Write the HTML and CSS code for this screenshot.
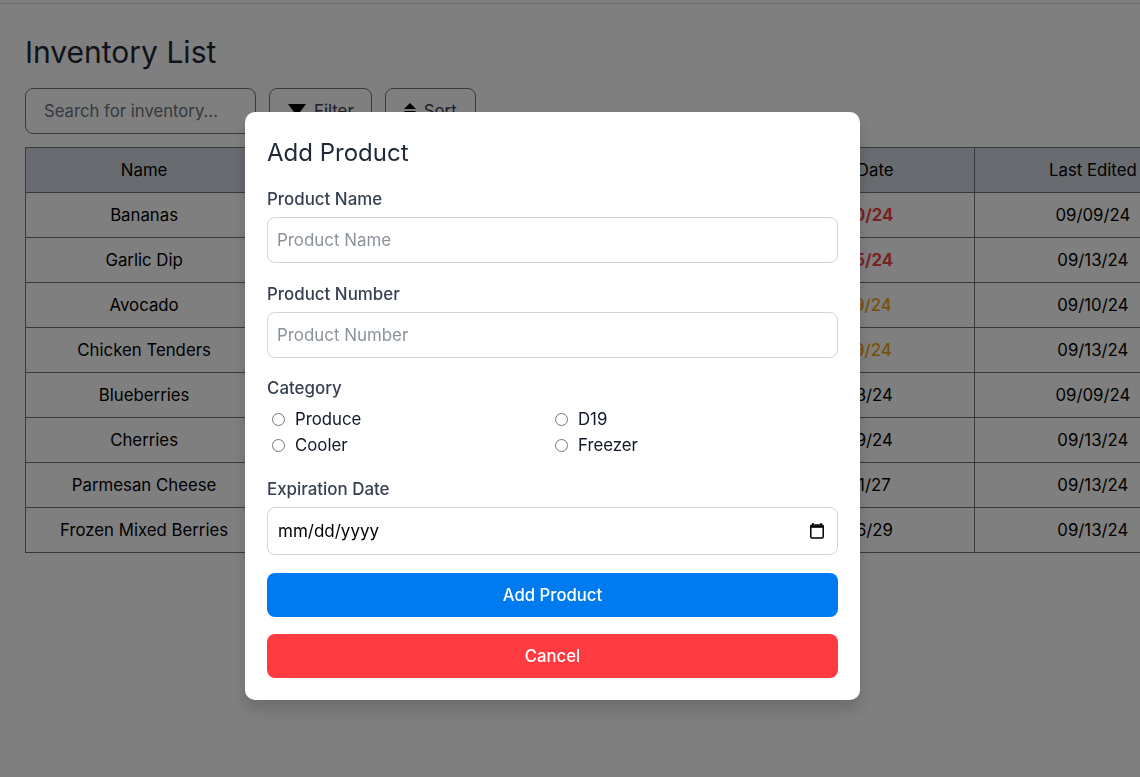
FILE: index.html
```html
<!DOCTYPE html>
<html lang="en">
<head>
  <meta charset="UTF-8">
  <title>Inventory List</title>
  <link rel="stylesheet" href="styles.css">
</head>
<body>

  <div class="topbar"></div>

  <main class="page">
    <h1>Inventory List</h1>

    <div class="toolbar">
      <input class="search" type="text" placeholder="Search for inventory...">
      <button class="tool-btn">
        <svg class="tool-icon" width="18" height="12" viewBox="0 0 18 12"><path d="M0 0h18l-9 12z" fill="#000"/></svg>
        Filter
      </button>
      <button class="tool-btn sort-btn">
        <svg class="tool-icon" width="12" height="14" viewBox="0 0 12 14"><path d="M6 0l6 6H0z" fill="#000"/><path d="M6 14l6-6H0z" fill="#000"/></svg>
        Sort
      </button>
    </div>

    <table class="inventory">
      <thead>
        <tr><th>Name</th><th>Number</th><th>Category</th><th>Exp. Date</th><th>Last Edited</th></tr>
      </thead>
      <tbody>
        <tr><td>Bananas</td><td></td><td></td><td class="expired">09/10/24</td><td>09/09/24</td></tr>
        <tr><td>Garlic Dip</td><td></td><td></td><td class="expired">09/15/24</td><td>09/13/24</td></tr>
        <tr><td>Avocado</td><td></td><td></td><td class="soon">09/19/24</td><td>09/10/24</td></tr>
        <tr><td>Chicken Tenders</td><td></td><td></td><td class="soon">09/19/24</td><td>09/13/24</td></tr>
        <tr><td>Blueberries</td><td></td><td></td><td>09/28/24</td><td>09/09/24</td></tr>
        <tr><td>Cherries</td><td></td><td></td><td>09/29/24</td><td>09/13/24</td></tr>
        <tr><td>Parmesan Cheese</td><td></td><td></td><td>02/01/27</td><td>09/13/24</td></tr>
        <tr><td>Frozen Mixed Berries</td><td></td><td></td><td>06/06/29</td><td>09/13/24</td></tr>
      </tbody>
    </table>
  </main>

  <div class="overlay">
    <form class="modal">
      <h2>Add Product</h2>

      <label class="field-label" for="productName">Product Name</label>
      <input class="text-input" id="productName" type="text" placeholder="Product Name">

      <label class="field-label second" for="productNumber">Product Number</label>
      <input class="text-input" id="productNumber" type="text" placeholder="Product Number">

      <div class="field-label third">Category</div>
      <div class="radios">
        <label class="radio"><input type="radio" name="category"> Produce</label>
        <label class="radio"><input type="radio" name="category"> D19</label>
        <label class="radio"><input type="radio" name="category"> Cooler</label>
        <label class="radio"><input type="radio" name="category"> Freezer</label>
      </div>

      <label class="field-label fourth" for="expDate">Expiration Date</label>
      <div class="date-input" id="expDate">
        <span>mm/dd/yyyy</span>
        <svg width="16" height="16" viewBox="0 0 16 16"><path d="M4 0v2M12 0v2" stroke="#000" stroke-width="1.6"/><rect x="1.8" y="2" width="12.4" height="13" rx="1.2" fill="none" stroke="#000" stroke-width="1.5"/><path d="M2 2.5h12v2.3H2z" fill="#000"/></svg>
      </div>

      <button class="action add" type="button">Add Product</button>
      <button class="action cancel" type="button">Cancel</button>
    </form>
  </div>

</body>
</html>
```

FILE: styles.css
```css
html, body {
  height: 100%;
}
body {
  margin: 0;
  font-family: 'Inter', sans-serif;
  background-color: #fff;
  color: #000;
  overflow: hidden;
}
.topbar {
  height: 3px;
  border-bottom: 1px solid #d1d5db;
}
.page {
  padding: 28px 25px 0;
}
h1 {
  margin: 0 0 16px;
  font-size: 30px;
  line-height: 40px;
  font-weight: 400;
  color: #1f2937;
}
.toolbar {
  display: flex;
  gap: 13px;
  margin-bottom: 13px;
}
.search {
  width: 231px;
  height: 46px;
  box-sizing: border-box;
  padding: 0 18px;
  font: 16.7px 'Inter', sans-serif;
  border: 1px solid #6b7280;
  border-radius: 8px;
}
.search::placeholder {
  color: #6b7280;
}
.tool-btn {
  display: flex;
  align-items: center;
  gap: 8px;
  height: 46px;
  box-sizing: border-box;
  padding: 0 17px 0 18px;
  font: 16.8px 'Inter', sans-serif;
  color: #374151;
  background: #fff;
  border: 1px solid #6b7280;
  border-radius: 8px;
}
.sort-btn {
  padding-right: 18px;
}
.tool-icon {
  margin-top: -2px;
}
.inventory {
  width: 1187px;
  table-layout: fixed;
  border-collapse: collapse;
  font-size: 16.8px;
}
.inventory th,
.inventory td {
  height: 45px;
  padding: 0;
  border: 1px solid #6b7280;
  text-align: center;
  font-weight: 400;
  box-sizing: border-box;
}
.inventory th {
  background-color: #d0d6de;
}
.expired {
  color: #ef4444;
  font-weight: 700 !important;
}
.soon {
  color: #f59e0b;
  font-weight: 500 !important;
}
.overlay {
  position: fixed;
  inset: 0;
  background: rgba(0, 0, 0, 0.5);
}
.modal {
  position: absolute;
  left: 245px;
  top: 112px;
  width: 615px;
  height: 588px;
  box-sizing: border-box;
  padding: 23px 22px 22px;
  background: #fff;
  border-radius: 10px;
  box-shadow: 0 10px 15px rgba(0, 0, 0, 0.15);
}
h2 {
  margin: 0 0 16px;
  font-size: 24px;
  line-height: 36px;
  font-weight: 400;
  color: #1f2937;
}
.field-label {
  display: block;
  margin-bottom: 6px;
  font-size: 16.9px;
  line-height: 24px;
  font-weight: 500;
  color: #374151;
}
.second {
  margin-top: 19px;
}
.third {
  margin-top: 18px;
  margin-bottom: 7px;
}
.fourth {
  margin-top: 20px;
}
.text-input {
  display: block;
  width: 100%;
  height: 46px;
  box-sizing: border-box;
  padding: 0 9px;
  font: 16.9px 'Inter', sans-serif;
  border: 1px solid #d1d5db;
  border-radius: 8px;
}
.text-input::placeholder {
  color: #8b929c;
}
.radios {
  display: grid;
  grid-template-columns: 283px 1fr;
  row-gap: 2px;
  padding-left: 5px;
}
.radio {
  display: flex;
  align-items: center;
  gap: 10px;
  height: 24px;
  font-size: 16.8px;
  color: #111827;
}
.radio input {
  width: 13px;
  height: 13px;
  margin: 0;
}
.date-input {
  display: flex;
  align-items: center;
  justify-content: space-between;
  height: 48px;
  box-sizing: border-box;
  padding: 0 12px 0 10px;
  font-size: 17px;
  border: 1px solid #d1d5db;
  border-radius: 8px;
}
.action {
  display: block;
  width: 100%;
  height: 44px;
  font: 500 16.7px 'Inter', sans-serif;
  color: #fff;
  border: none;
  border-radius: 8px;
}
.add {
  margin-top: 18px;
  background-color: #007bef;
}
.cancel {
  margin-top: 17px;
  background-color: #ff3b42;
}
```
